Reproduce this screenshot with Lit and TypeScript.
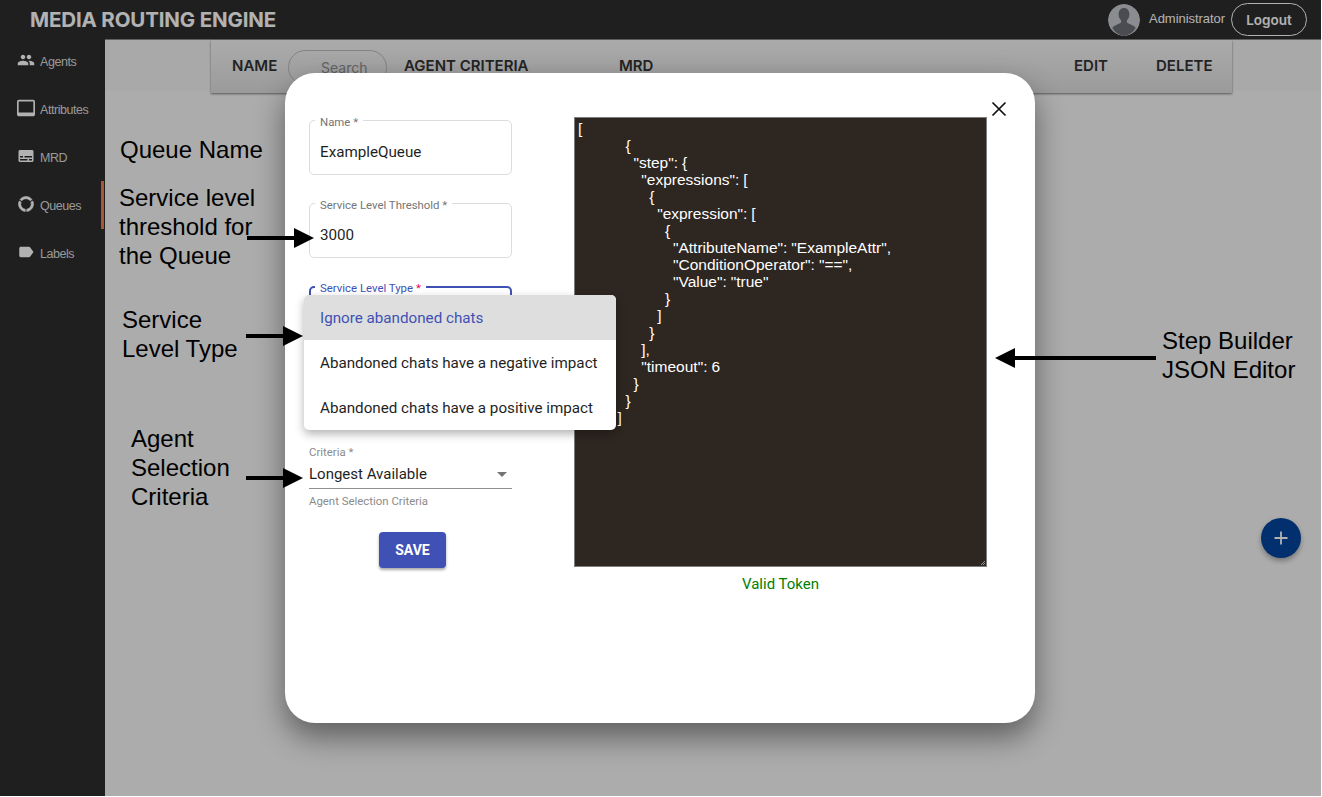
import { LitElement, html, css, svg } from "lit";
import { customElement } from "lit/decorators.js";

const nav = [
  { label: "Agents", d: "M16 11c1.660 0 2.990-1.340 2.990-3S17.660 5 16 5s-3 1.340-3 3 1.340 3 3 3zm-8 0c1.660 0 2.990-1.340 2.990-3S9.660 5 8 5 5 6.340 5 8s1.340 3 3 3zm0 2c-2.330 0-7 1.170-7 3.500V19h14v-2.500C15 14.170 10.330 13 8 13zm8 0c-.29 0-.62.02-.97.05 1.160.84 1.970 1.970 1.970 3.450V19h6v-2.500c0-2.330-4.670-3.500-7-3.500z" },
  { label: "Attributes", d: "M2.500 1H21.500C22.900 1 24 2.100 24 3.500V20.500C24 21.900 22.900 23 21.500 23H2.500C1.100 23 0 21.900 0 20.500V3.500C0 2.100 1.100 1 2.500 1zM2.200 3.200V18H21.800V3.200z" },
  { label: "MRD", d: "M20 4H4c-1.100 0-2 .9-2 2v12c0 1.100.9 2 2 2h16c1.100 0 2-.9 2-2V6c0-1.100-.9-2-2-2zM4 12h4v2H4v-2zm10 6H4v-2h10v2zm6 0h-4v-2h4v2zm0-4H10v-2h10v2z" },
  { label: "Queues", active: true, d: "M13 2.050v3.030c3.390.49 6 3.390 6 6.920 0 .9-.18 1.750-.48 2.540l2.600 1.530c.56-1.240.88-2.620.88-4.070 0-5.180-3.950-9.450-9-9.950zM11 2.050C5.940 2.550 2 6.810 2 12c0 1.450.32 2.830.88 4.070l2.600-1.530C5.180 13.750 5 12.900 5 12c0-3.530 2.610-6.430 6-6.920zM12 19c-2.210 0-4.170-1.020-5.450-2.620l-2.600 1.530C5.760 20.390 8.690 22 12 22s6.240-1.610 8.060-4.090l-2.600-1.530C16.170 17.980 14.210 19 12 19z" },
  { label: "Labels", d: "M17.630 5.840C17.270 5.330 16.670 5 16 5L5 5.010C3.900 5.010 3 5.900 3 7v10c0 1.100.9 1.990 2 1.990L16 19c.67 0 1.270-.33 1.630-.84L22 12l-4.370-6.160z" },
];

const json = `[
            {
              "step": {
                "expressions": [
                  {
                    "expression": [
                      {
                        "AttributeName": "ExampleAttr",
                        "ConditionOperator": "==",
                        "Value": "true"
                      }
                    ]
                  }
                ],
                "timeout": 6
              }
            }
          ]`;

const arrow = (w: number, left = false) => {
  const h = 20;
  return html`<svg class="arrow" width=${w} height=${h} viewBox="0 0 ${w} ${h}">
    ${left
      ? svg`<polygon points="0,10 20,0 20,20" fill="#000"/><rect x="18" y="8" width=${w - 18} height="4" fill="#000"/>`
      : svg`<polygon points="${w},10 ${w - 20},0 ${w - 20},20" fill="#000"/><rect x="0" y="8" width=${w - 18} height="4" fill="#000"/>`}
  </svg>`;
};

@customElement("app-root")
export class AppRoot extends LitElement {
  static styles = css`
    :host {
      display: block;
      width: 1322px;
      height: 797px;
      position: relative;
      overflow: hidden;
      font-family: Roboto, "Liberation Sans", sans-serif;
      background: #fff;
    }
    .shell { display: flex; flex-direction: column; width: 1321px; height: 796px; }
    .top {
      flex: none;
      height: 39px;
      background: #2d2d2d;
      border-bottom: 1px solid #8a8a8a;
      display: flex;
      align-items: center;
      color: #fff;
      padding-left: 30px;
      padding-right: 14px;
    }
    .brand {
      font-family: Inter, "Liberation Sans", sans-serif;
      font-weight: 700;
      font-size: 20.500px;
      letter-spacing: -0.15px;
      flex: 1;
    }
    .avatar { width: 32px; height: 32px; border-radius: 50%; margin-right: 9px; display: block; }
    .admin { font-size: 13px; font-family: "Liberation Sans", sans-serif; margin-right: 6px; margin-top: -2px; letter-spacing: -0.05px; }
    .logout {
      width: 76px;
      height: 33px;
      border: 1px solid #fff;
      border-radius: 17px;
      display: flex;
      align-items: center;
      justify-content: center;
      font-family: Inter, "Liberation Sans", sans-serif;
      font-size: 13.500px;
      font-weight: 600;
      box-sizing: border-box;
    }
    .body { flex: 1; display: flex; min-height: 0; }
    .side { flex: none; width: 105px; background: #2d2d2d; box-sizing: border-box; margin-top: -3px; }
    .nav {
      height: 48px;
      display: flex;
      align-items: center;
      padding-left: 17px;
      gap: 5px;
      color: #dcdcdc;
      font-size: 12.500px;
      font-family: "Liberation Sans", sans-serif;
      letter-spacing: -0.45px;
      box-sizing: border-box;
    }
    .nav svg { width: 18px; height: 18px; fill: #fff; flex: none; margin-top: -3px; }
    .nav span { margin-top: 1px; }
    .nav.active { border-right: 3px solid #ee7d4b; width: 104px; }
    .nav.active svg { transform: rotate(180deg); stroke: #fff; stroke-width: 0.8; margin-top: -2px; }
    .main { flex: 1; background: #f6f6f6; position: relative; }
    .band { height: 51px; background: #f3f3f3; }
    .tbar {
      position: absolute;
      left: 106px;
      top: 0;
      width: 1021px;
      height: 53px;
      background: linear-gradient(#f5f5f5, #dedede);
      box-shadow: 0 1px 2px rgba(0,0,0,.5);
      font-family: Inter, "Noto Sans", sans-serif;
      font-weight: 600;
      font-size: 15px;
      color: #333;
    }
    .tbar span { position: absolute; top: 16px; }
    .search {
      position: absolute;
      left: 77px;
      top: 10px;
      width: 99px;
      height: 35px;
      border: 1px solid #bbb;
      border-radius: 18px;
      box-sizing: border-box;
      color: #8d8d8d;
      font-weight: 400;
      font-size: 14px;
      padding: 8px 0 0 32px;
      overflow: hidden;
    }
    .fab {
      position: absolute;
      left: 1156px;
      top: 478px;
      width: 40px;
      height: 40px;
      border-radius: 50%;
      background: #03459f;
      box-shadow: 0 3px 5px rgba(0,0,0,.3);
      display: flex;
      align-items: center;
      justify-content: center;
    }
    .fab svg { width: 16px; height: 16px; display: block; }
    .scrim { position: absolute; left: 0; top: 0; width: 1321px; height: 796px; background: rgba(0,0,0,.3); }
    .modal {
      position: absolute;
      left: 285px;
      top: 73px;
      width: 750px;
      height: 650px;
      background: #fff;
      border-radius: 30px;
      box-shadow: 0 14px 30px 0 rgba(0,0,0,.45);
    }
    .form { position: absolute; left: 24px; top: 47px; width: 203px; }
    .field {
      position: relative;
      height: 55px;
      border: 1px solid #dcdcdc;
      border-radius: 5px;
      box-sizing: border-box;
      margin-bottom: 28px;
      font-size: 15.200px;
      color: #1f1f1f;
      padding: 23px 0 0 10px;
      line-height: 17px;
    }
    .field label {
      position: absolute;
      left: 5px;
      top: -5px;
      background: #fff;
      padding: 0 5px;
      font-size: 11.400px;
      line-height: 12px;
      color: #757575;
    }
    .field.focus { border: 2px solid #3f51b5; }
    .field.focus label { color: #3f51b5; left: 4px; top: -6px; }
    .field.focus i { color: #f50057; font-style: normal; }
    .select { position: absolute; left: 24px; top: 373px; width: 203px; }
    .select small { display: block; font-size: 11.400px; line-height: 12px; color: #8b8b8b; }
    .sval {
      display: flex;
      align-items: center;
      justify-content: space-between;
      border-bottom: 1px solid #8f8f8f;
      height: 31px;
      font-size: 15px;
      color: #1f1f1f;
      padding-top: 2px;
      box-sizing: border-box;
    }
    .sval b { width: 0; height: 0; border: 5px solid transparent; border-top-color: #757575; margin: 5px 5px 0 0; }
    .select small.help { margin-top: 6px; }
    .save {
      position: absolute;
      left: 94px;
      top: 459px;
      width: 67px;
      height: 36px;
      background: #3f51b5;
      border-radius: 4px;
      color: #fff;
      font-size: 14px;
      font-weight: 700;
      display: flex;
      align-items: center;
      justify-content: center;
      box-sizing: border-box;
      box-shadow: 0 2px 3px rgba(0,0,0,.35);
    }
    .menu {
      position: absolute;
      left: 19px;
      top: 222px;
      width: 312px;
      height: 135px;
      background: #fff;
      border-radius: 5px;
      box-shadow: 0 4px 10px rgba(0,0,0,.3);
      overflow: hidden;
      z-index: 3;
    }
    .item {
      height: 45px;
      padding-left: 16px;
      display: flex;
      align-items: center;
      font-size: 15.200px;
      color: #1f1f1f;
      box-sizing: border-box;
      padding-top: 1px;
    }
    .item.sel { background: #dedede; color: #3f51b5; }
    .editor {
      position: absolute;
      left: 289px;
      top: 44px;
      width: 413px;
      height: 450px;
      box-sizing: border-box;
      background: #2e2620;
      border: 1px solid #7d7d7d;
      color: #fff;
      font-family: "Liberation Sans", sans-serif;
      font-size: 15.500px;
      word-spacing: -0.350px;
      line-height: 17px;
      white-space: pre;
      margin: 0;
      padding: 2px 3px;
    }
    .grip { position: absolute; right: 1px; bottom: 1px; width: 4px; height: 4px; display: block; }
    .valid {
      position: absolute;
      left: 289px;
      top: 502px;
      width: 413px;
      text-align: center;
      color: #008000;
      font-size: 15px;
    }
    .close { position: absolute; left: 706px; top: 28px; width: 16px; height: 16px; display: block; }
    .note {
      position: absolute;
      color: #000;
      font-family: "Liberation Sans", sans-serif;
      font-size: 24px;
      line-height: 29px;
      z-index: 5;
      white-space: pre;
    }
    .arrow { position: absolute; display: block; z-index: 5; }
    .a1 { left: 247px; top: 228px; }
    .a2 { left: 246px; top: 326px; }
    .a3 { left: 246px; top: 468px; }
    .a4 { left: 995px; top: 348px; }
  `;

  render() {
    return html`
      <div class="shell">
        <div class="top">
          <div class="brand">MEDIA ROUTING ENGINE</div>
          <svg class="avatar" viewBox="0 0 32 32">
            <circle cx="16" cy="16" r="16" fill="#c6c9ce"></circle>
            <path fill="#6a6e76" d="M16 4c3.400 0 5.400 2.600 5.400 6.200 0 2.600-1 4.900-2.500 6.100v1.800c0 1 3 2 6 3.400 1.400.7 2.300 1.500 2.800 2.600A16 16 0 0 1 16 32 16 16 0 0 1 4.300 24.100c.5-1.100 1.400-1.900 2.800-2.600 3-1.400 6-2.400 6-3.400v-1.800c-1.500-1.200-2.500-3.500-2.500-6.100C10.600 6.600 12.600 4 16 4z"></path>
          </svg>
          <span class="admin">Administrator</span>
          <div class="logout">Logout</div>
        </div>
        <div class="body">
          <div class="side">
            ${nav.map(
              (n) => html`<div class="nav ${n.active ? "active" : ""}">
                <svg viewBox="0 0 24 24"><path fill-rule="evenodd" d=${n.d}></path></svg><span>${n.label}</span>
              </div>`
            )}
          </div>
          <div class="main">
            <div class="band"></div>
            <div class="tbar">
              <span style="left:21px">NAME</span>
              <div class="search">Search</div>
              <span style="left:193px">AGENT CRITERIA</span>
              <span style="left:408px">MRD</span>
              <span style="left:863px">EDIT</span>
              <span style="left:945px">DELETE</span>
            </div>
            <div class="fab">
              <svg viewBox="0 0 16 16"><path d="M8 1.500v13M1.500 8h13" stroke="#fff" stroke-width="1.800" fill="none"></path></svg>
            </div>
          </div>
        </div>
      </div>
      <div class="scrim"></div>
      <div class="modal">
        <div class="form">
          <div class="field"><label>Name *</label>ExampleQueue</div>
          <div class="field"><label>Service Level Threshold *</label>3000</div>
          <div class="field focus"><label>Service Level Type <i>*</i></label></div>
        </div>
        <div class="select">
          <small>Criteria *</small>
          <div class="sval">Longest Available<b></b></div>
          <small class="help">Agent Selection Criteria</small>
        </div>
        <div class="save">SAVE</div>
        <pre class="editor">${json}<svg class="grip" viewBox="0 0 6 6"><path d="M0 6L6 0M3 6L6 3" stroke="#ccc" stroke-width="1" fill="none"></path></svg></pre>
        <div class="valid">Valid Token</div>
        <svg class="close" viewBox="0 0 16 16"><path d="M1.500 1.500l13 13M14.500 1.500l-13 13" stroke="#111" stroke-width="1.700" fill="none"></path></svg>
        <div class="menu">
          <div class="item sel">Ignore abandoned chats</div>
          <div class="item">Abandoned chats have a negative impact</div>
          <div class="item">Abandoned chats have a positive impact</div>
        </div>
      </div>
      <div class="note" style="left:120px;top:135px">Queue Name</div>
      <div class="note" style="left:119px;top:183px">Service level
threshold for
the Queue</div>
      <div class="note" style="left:122px;top:305px">Service
Level Type</div>
      <div class="note" style="left:131px;top:424px">Agent
Selection
Criteria</div>
      <div class="note" style="left:1162px;top:326px">Step Builder
JSON Editor</div>
      <div class="a1 arrow">${arrow(67)}</div>
      <div class="a2 arrow">${arrow(57)}</div>
      <div class="a3 arrow">${arrow(57)}</div>
      <div class="a4 arrow">${arrow(161, true)}</div>
    `;
  }
}
